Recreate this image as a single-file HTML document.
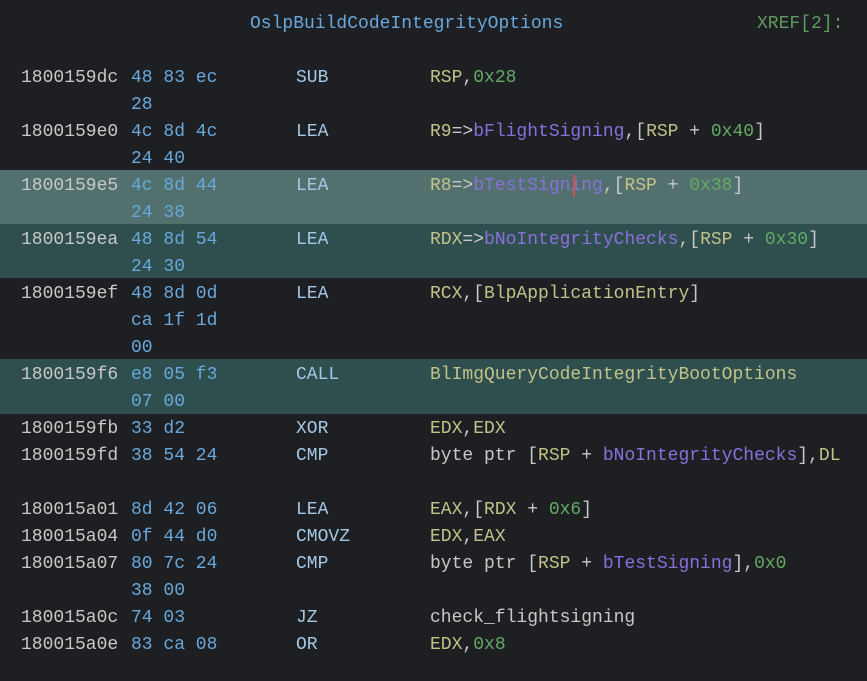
<!DOCTYPE html>
<html><head><meta charset="utf-8"><style>
body{margin:0;width:867px;height:681px;background:#1e1f22;overflow:hidden;font:18px/27px "Liberation Mono",monospace;color:#d0d0d0;}
.t{position:absolute;white-space:pre;}
.hl{position:absolute;left:0;width:867px;}
.a{color:#c8c8c8}.b{color:#68a8dc}.m{color:#a4c8e6}.r{color:#c2c28a}.p{color:#8a70dc}.n{color:#64aa64}.w{color:#c8c8c8}
</style></head><body>
<div class="hl" style="top:170px;height:54px;background:#52716e"></div>
<div class="hl" style="top:224px;height:54px;background:#2f4f4e"></div>
<div class="hl" style="top:359px;height:55px;background:#2f4f4e"></div>
<div class="t" style="left:250px;top:11px;color:#68a8dc">OslpBuildCodeIntegrityOptions</div>
<div class="t" style="left:757px;top:11px;color:#5f9a5f">XREF[2]:</div>
<div id="rows"></div>
<script>
var R=[
[63,"1800159dc","48 83 ec\n28","SUB",'<span class="r">RSP</span><span class="w">,</span><span class="n">0x28</span>'],
[117,"1800159e0","4c 8d 4c\n24 40","LEA",'<span class="r">R9</span><span class="w">=&gt;</span><span class="p">bFlightSigning</span><span class="w">,[</span><span class="r">RSP</span><span class="w"> + </span><span class="n">0x40</span><span class="w">]</span>'],
[171,"1800159e5","4c 8d 44\n24 38","LEA",'<span class="r">R8</span><span class="w">=&gt;</span><span class="p">bTestSigning</span><span class="w">,[</span><span class="r">RSP</span><span class="w"> + </span><span class="n">0x38</span><span class="w">]</span>'],
[225,"1800159ea","48 8d 54\n24 30","LEA",'<span class="r">RDX</span><span class="w">=&gt;</span><span class="p">bNoIntegrityChecks</span><span class="w">,[</span><span class="r">RSP</span><span class="w"> + </span><span class="n">0x30</span><span class="w">]</span>'],
[279,"1800159ef","48 8d 0d\nca 1f 1d\n00","LEA",'<span class="r">RCX</span><span class="w">,[</span><span class="r">BlpApplicationEntry</span><span class="w">]</span>'],
[360,"1800159f6","e8 05 f3\n07 00","CALL",'<span class="r">BlImgQueryCodeIntegrityBootOptions</span>'],
[414,"1800159fb","33 d2","XOR",'<span class="r">EDX</span><span class="w">,</span><span class="r">EDX</span>'],
[441,"1800159fd","38 54 24","CMP",'<span class="w">byte ptr [</span><span class="r">RSP</span><span class="w"> + </span><span class="p">bNoIntegrityChecks</span><span class="w">],</span><span class="r">DL</span>'],
[495,"180015a01","8d 42 06","LEA",'<span class="r">EAX</span><span class="w">,[</span><span class="r">RDX</span><span class="w"> + </span><span class="n">0x6</span><span class="w">]</span>'],
[522,"180015a04","0f 44 d0","CMOVZ",'<span class="r">EDX</span><span class="w">,</span><span class="r">EAX</span>'],
[549,"180015a07","80 7c 24\n38 00","CMP",'<span class="w">byte ptr [</span><span class="r">RSP</span><span class="w"> + </span><span class="p">bTestSigning</span><span class="w">],</span><span class="n">0x0</span>'],
[603,"180015a0c","74 03","JZ",'<span class="w">check_flightsigning</span>'],
[630,"180015a0e","83 ca 08","OR",'<span class="r">EDX</span><span class="w">,</span><span class="n">0x8</span>']];
var h="";R.forEach(function(x){var y=x[0]+2;h+='<div class="t a" style="left:21px;top:'+y+'px">'+x[1]+'</div><div class="t b" style="left:131px;top:'+y+'px">'+x[2]+'</div><div class="t m" style="left:296px;top:'+y+'px">'+x[3]+'</div><div class="t" style="left:430px;top:'+y+'px">'+x[4]+'</div>';});
document.getElementById("rows").innerHTML=h;
</script>
<div style="position:absolute;left:573px;top:175px;width:2px;height:22px;background:#d05050"></div>
</body></html>
